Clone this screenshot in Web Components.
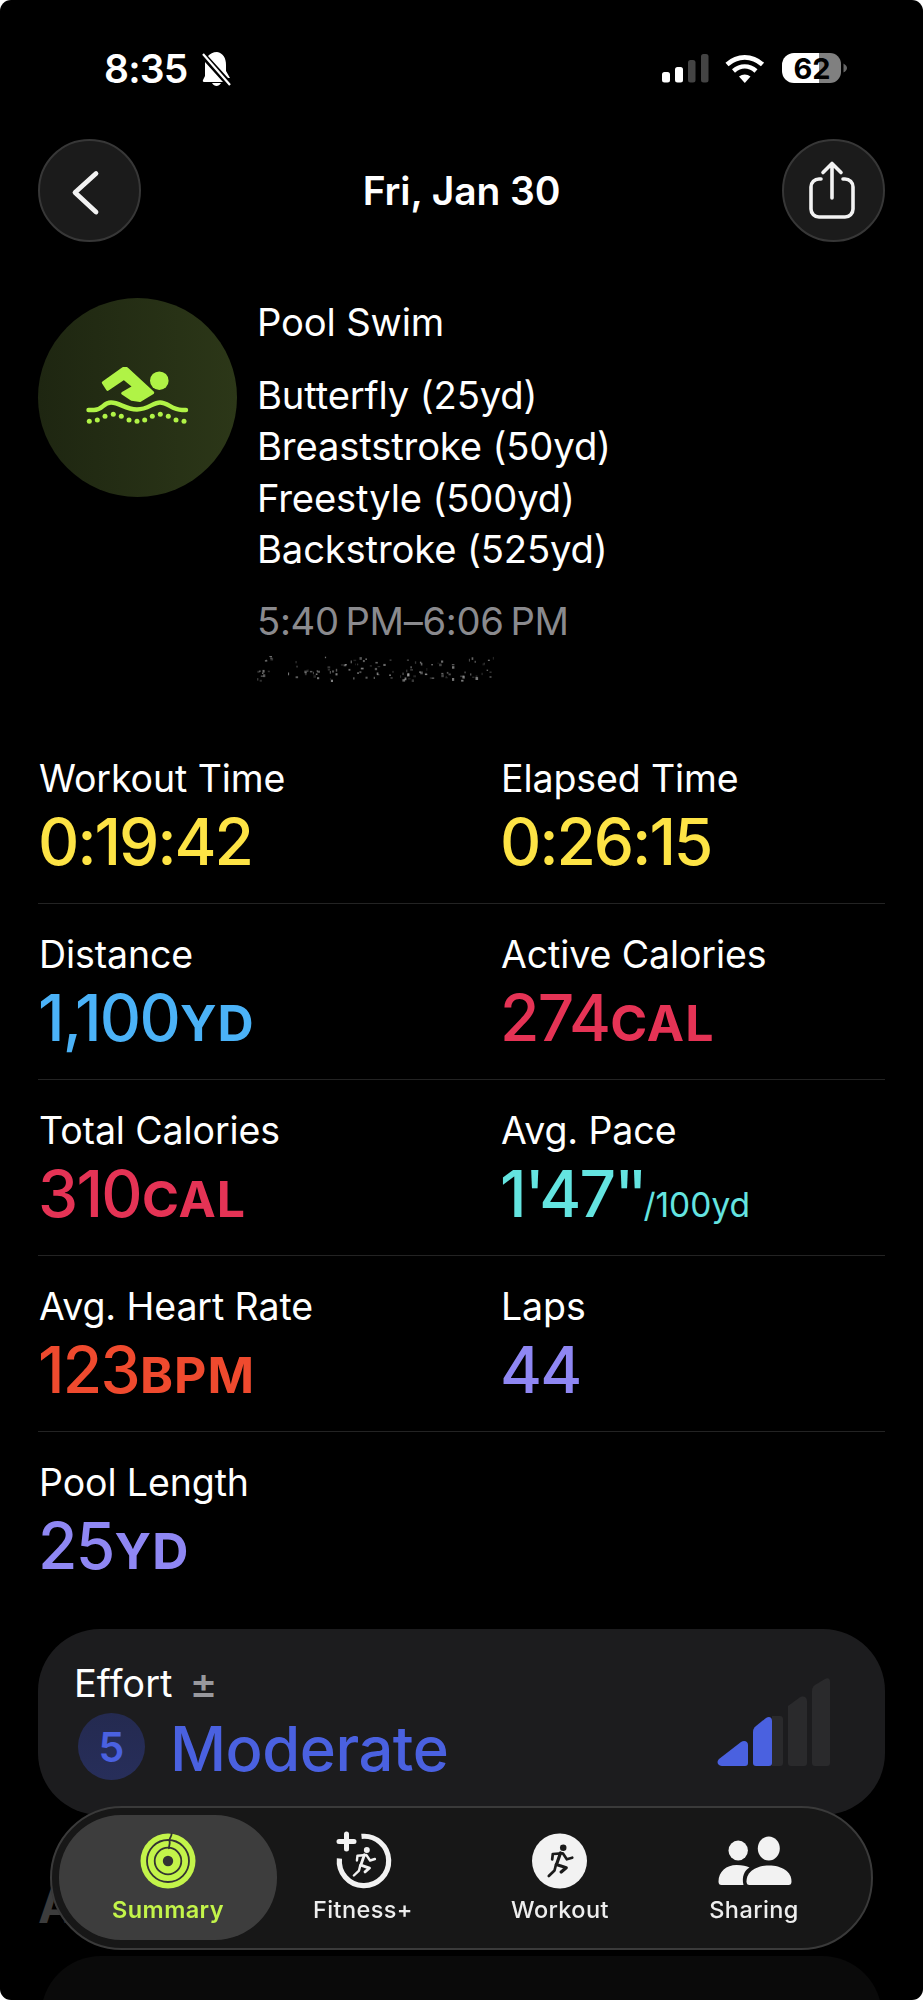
<!DOCTYPE html>
<html lang="en"><head><meta charset="utf-8"><title>Pool Swim</title>
<style>
html,body{margin:0;padding:0;background:#fff}
body{width:923px;height:2000px;overflow:hidden;font-family:Inter,"Liberation Sans",sans-serif;color:#fff}
</style></head><body>
<x-page>
  <x-status></x-status>
  <x-nav>Fri, Jan 30</x-nav>
  <x-head title-text="Pool Swim">
    <div>Butterfly (25yd)</div><div>Breaststroke (50yd)</div><div>Freestyle (500yd)</div><div>Backstroke (525yd)</div>
  </x-head>
  <x-metrics>
    <x-metric label="Workout Time" color="#fde345" value="0:19:42" tight></x-metric>
    <x-metric label="Elapsed Time" color="#fde345" value="0:26:15" tight></x-metric>
    <x-metric label="Distance" color="#4bb2f7" value="1,100" unit="YD"></x-metric>
    <x-metric label="Active Calories" color="#e53355" value="274" unit="CAL"></x-metric>
    <x-metric label="Total Calories" color="#e53355" value="310" unit="CAL"></x-metric>
    <x-metric label="Avg. Pace" color="#64e4e0" value="1'47<span style='letter-spacing:-7px'>''</span>" small="/100yd"></x-metric>
    <x-metric label="Avg. Heart Rate" color="#ef4a2e" value="123" unit="BPM"></x-metric>
    <x-metric label="Laps" color="#8f87f3" value="44"></x-metric>
    <x-metric label="Pool Length" color="#8f87f3" value="25" unit="YD" last></x-metric>
  </x-metrics>
  <x-effort></x-effort>
  <x-activity></x-activity>
  <x-tabbar></x-tabbar>
</x-page>
<script>
function def(name, css, html){
  customElements.define(name, class extends HTMLElement{
    connectedCallback(){
      if(this.shadowRoot) return;
      const r=this.attachShadow({mode:'open'});
      r.innerHTML='<style>'+css+'</style>'+(typeof html==='function'?html(this):html);
    }
  });
}
def('x-page',':host{display:block;width:923px;height:2000px;overflow:hidden;background:#000;border-radius:11px;position:relative}','<slot></slot>');

def('x-status',`:host{display:flex;height:138px;box-sizing:border-box;justify-content:space-between;font-family:Inter,sans-serif}
.time{font-size:39px;line-height:44px;font-weight:600;margin:47px 0 0 104px;letter-spacing:-.8px;display:flex;gap:13px;height:44px}
svg{display:block}`,
`<div class="time"><span>8:35</span><svg width="32" height="36" viewBox="199 52 32 36" style="margin-top:4px" fill="#fff">
<path d="M215 53c6 1 9 6 9 13v6l4 7h-2L206 57c2-2 5-4 9-4zM203 63l18 20h-19c-1 0-1.500-1-1-2l2-4z"/><path d="M210 84h9c-1 2-3 3-4.500 3s-3.500-1-4.500-3z"/><path d="M201 55l27 31" stroke="#fff" stroke-width="2.200"/></svg></div>
<svg width="200" height="60" viewBox="650 40 200 60" style="margin:40px 73px 0 0;flex:none">
<g><rect x="662" y="72" width="8" height="10.500" rx="2.500" fill="#fff"/><rect x="675" y="67" width="8" height="15.500" rx="2.500" fill="#fff"/><rect x="688" y="60" width="7.500" height="22.500" rx="2.500" fill="#444"/><rect x="701" y="54" width="7.500" height="28.500" rx="2.500" fill="#444"/></g>
<g fill="none" stroke="#fff" stroke-width="4.600"><path d="M727 64.500c10.500-9.500 25-9.500 35.500 0"/><path d="M733.500 71c7-6 15.500-6 22.500 0"/></g><path d="M739 76.500c3.500-2.800 8-2.800 11.500 0L744.800 83z" fill="#fff"/>
<path d="M794 53h25v30h-25a12 12 0 0 1-12-12v-6a12 12 0 0 1 12-12z" fill="#fff"/><path d="M819 53h11a11 11 0 0 1 11 11v8a11 11 0 0 1-11 11h-11z" fill="#808080"/><path d="M843.500 63.500c2.500 1.500 3.500 3 3.500 4.500s-1 3-3.500 4.500z" fill="#666"/>
<text x="812" y="78.500" text-anchor="middle" font-family="Inter,sans-serif" font-weight="700" font-size="29" fill="#000">62</text></svg>`);

def('x-nav',`:host{display:flex;height:104px;padding:0 38px;justify-content:space-between;align-items:center}
.b{width:103px;height:103px;box-sizing:border-box;border-radius:50%;background:#1b1b1b;border:2px solid #373737;flex:none;display:flex}
.t{font-size:39px;font-weight:600;letter-spacing:-.1px}svg{display:block;margin:-2px;flex:none}`,
`<div class="b"><svg width="103" height="103" viewBox="38 138 103 103" fill="none" stroke="#f2f2f2" stroke-width="4.800" stroke-linecap="round" stroke-linejoin="round"><path d="M96 172.500L75 191.500L96 211"/></svg></div>
<div class="t"><slot></slot></div>
<div class="b"><svg width="103" height="103" viewBox="782 138 103 103" fill="none" stroke="#f2f2f2" stroke-width="3.600" stroke-linecap="round" stroke-linejoin="round"><path d="M821 178h-2a8 8 0 0 0-8 8v22a8 8 0 0 0 8 8h26a8 8 0 0 0 8-8v-22a8 8 0 0 0-8-8h-2"/><path d="M832 197V163M823 171.500l9-9 9 9"/></svg></div>`);

const dots=[[89.3,421.3],[97.3,420],[105,416.3],[113.3,414.3],[121.3,416.3],[129,420],[137,421.3],[144.7,420],[152.3,416.3],[160.3,414.3],[168.3,416.3],[176,420],[184,421.3]].map(d=>`<circle cx="${d[0]}" cy="${d[1]}" r="2.500"/>`).join('');
let seed=7;function rnd(){seed=(seed*16807)%2147483647;return seed/2147483647}
let specks='';for(let i=0;i<130;i++){const x=rnd()*237,y=2+rnd()*24,o=(.1+rnd()*.4).toFixed(2);if(x>14&&x<30)continue;specks+=`<rect x="${x.toFixed(1)}" y="${y.toFixed(1)}" width="${(1+rnd()*1.800).toFixed(1)}" height="${(1+rnd()*2).toFixed(1)}" fill="#fff" opacity="${o}"/>`}
def('x-head',`:host{display:flex;gap:20px;padding:0 38px;margin-top:56px;align-items:flex-start}
.c{width:199px;height:199px;border-radius:50%;background:linear-gradient(90deg,#1e2611,#2c3718);flex:none;overflow:hidden}
.txt{font-size:38.200px;line-height:51.500px;font-weight:400;letter-spacing:-.15px;margin-top:-1px}
.l{margin:21px 0 20.500px}.tm{color:#8a8a8e;letter-spacing:-.3px}svg{display:block}`,
h=>`<div class="c"><svg width="199" height="199" viewBox="38 298 199 199" fill="#b0f346"><path d="M103.300 382.700L123.300 368.500H126.700L152.700 392.700L140 400.500L131.700 399.300L122.700 393.300L134 386.700L124 378.300L107.700 389.300Z" stroke="#b0f346" stroke-width="3" stroke-linejoin="round"/><circle cx="159.300" cy="380.700" r="9.300"/><path d="M88.500 410H94C103 410 103 402.500 111 402.500C120 402.500 125 409.500 137 409.500C148 409.500 153 402.500 160 402.500C168 402.500 172 410 182 410H186" fill="none" stroke="#b0f346" stroke-width="4.400" stroke-linecap="round"/>${dots}</svg></div>
<div class="txt"><div>${h.getAttribute('title-text')}</div><div class="l"><slot></slot></div><div class="tm">5:40\u2009PM–6:06\u2009PM</div><svg width="237" height="28" viewBox="0 0 237 28" aria-hidden="true" style="margin-top:6px">${specks}</svg></div>`);

def('x-metrics',`:host{display:grid;grid-template-columns:462px 385px;margin:46px 38px 0}`,'<slot></slot>');
def('x-metric',`:host{display:block;height:176px;box-sizing:border-box;padding-top:29px;border-bottom:1.500px solid #232323}
:host([last]){border-bottom:0}
.l{font-size:37.500px;line-height:44px;padding-left:1px;letter-spacing:-.1px}
.v{font-size:64px;line-height:72px;font-weight:500;margin-top:5px;letter-spacing:-1.700px;white-space:nowrap}
:host([tight]) .v{letter-spacing:-2.100px}
.u{font-size:50px;letter-spacing:1px;font-weight:700;margin-left:1px}.s{font-size:33.500px;font-weight:400;letter-spacing:0;margin-left:3px}`,
h=>`<div class="l">${h.getAttribute('label')}</div><div class="v" style="color:${h.getAttribute('color')}">${h.getAttribute('value')}${h.hasAttribute('unit')?`<span class="u">${h.getAttribute('unit')}</span>`:''}${h.hasAttribute('small')?`<span class="s">${h.getAttribute('small')}</span>`:''}</div>`);

def('x-effort',`:host{display:block;height:186px;box-sizing:border-box;margin:21px 38px 0;border-radius:62px;background:#1c1c1e;padding:31px 36px 0;position:relative}
.t{font-size:38px;line-height:46px;display:flex;align-items:center;gap:17px}
.pm{color:#98989d;font-size:42px;line-height:46px;font-weight:500}
.r{display:flex;align-items:center;margin:7px 0 0 4px;gap:25px;height:68px}
.n{width:67px;height:67px;border-radius:50%;background:linear-gradient(#242a50,#272e5a);color:#4a61e0;font-size:41px;font-weight:600;display:flex;align-items:center;justify-content:center}
.m{color:#4a61e0;font-size:61.500px;font-weight:500;letter-spacing:-.5px;padding-top:4px}
svg{position:absolute;left:0;top:0}`,
`<div class="t">Effort<span class="pm">±</span></div><div class="r"><div class="n">5</div><div class="m">Moderate</div></div>
<svg width="847" height="186" viewBox="38 1630 847 186"><g fill="#2a2a2c"><path d="M772 1717l8-0c2 0 3 1.500 3 3v44c0 2-1 3-3 3h-8z"/><path d="M788 1707l11-8c4-3 8-1 8 3v62c0 2-1 3-3 3h-13c-2 0-3-1-3-3z"/><path d="M812 1692c0-3 1-4 3-6l10-6c3-1.500 5-.5 5 3v81c0 2-1 3-3 3h-12c-2 0-3-1-3-3z"/></g>
<path d="M719 1760l22-17c3-2 7-1 7 3v18c0 2-1 3-3 3h-23c-4 0-6-4-3-7z" fill="#4a61e0"/><path d="M753 1733c0-3 1-4 3-6l10-8c3-2 6-1 6 3v42c0 2-1 3-3 3h-13c-2 0-3-1-3-3z" fill="#4a61e0"/></svg>`);

def('x-activity',`:host{display:block;margin:0 41px 0 38px}
.h{font-size:48px;font-weight:700;line-height:58px;color:#3c3c3c;margin-top:62px}
.c{height:60px;margin:21.500px 0 0 3px;border-radius:60px 60px 0 0;background:#0a0a0a}`,
`<div class="h">Activity</div><div class="c"></div>`);

def('x-tabbar',`:host{position:absolute;left:50px;top:1806px;width:823px;height:144px;box-sizing:border-box;border-radius:72px;background:rgba(24,24,24,.97);border:2.500px solid #3a3a3a;display:block;backdrop-filter:blur(7px)}
.p{position:absolute;left:6.500px;top:6.500px;width:218px;height:125px;border-radius:62px;background:rgba(64,64,64,.94)}
.t{position:absolute;top:0;height:100%;text-align:center;transform:translateX(-50%);white-space:nowrap;font-size:23.500px;font-weight:500;letter-spacing:.4px;color:#eee;width:180px}
.t span{position:absolute;left:0;right:0;top:87px;line-height:30px}
svg{position:absolute;left:0;top:0}.a{color:#c3f44a;font-weight:600}`,
()=>{
const runner=(cx,cy,col,s=1)=>`<g transform="translate(${cx} ${cy}) scale(${s})" fill="none" stroke="${col}" stroke-width="2.700" stroke-linecap="round" stroke-linejoin="round"><circle cx="3.700" cy="-13.300" r="2.300" fill="${col}" stroke-width="2"/><path d="M-7.300-1.700L-6.700-7L3.300-7.700L7.300-1.700L12.700-3.300"/><path d="M1-8L-3 3.500L6.700 6.700L1.700 11" stroke-width="3.200"/><path d="M-3.500 3.500L-5 9.500L-10.700 15"/></g>`;
return `<div class="p"></div>
<svg width="823" height="144" viewBox="52.500 1808.500 823 144">
<circle cx="168.500" cy="1861.500" r="27.500" fill="#c3f44a"/><g fill="none" stroke="#333" stroke-width="1.800"><circle cx="168.500" cy="1861.500" r="21"/><circle cx="168.500" cy="1861.500" r="13.300"/></g><circle cx="168.500" cy="1861.500" r="5.200" fill="#333"/><path d="M172 1833.500c1 4-3 5-2 8s-1 5-.5 8" fill="none" stroke="#333" stroke-width="1.800"/>
<path d="M362 1836.900A24.700 24.700 0 1 1 339.900 1859" fill="none" stroke="#f2f2f2" stroke-width="5.200"/><path d="M347 1834.500v15M339.500 1842h15" stroke="#f2f2f2" stroke-width="5" stroke-linecap="round"/>${runner(364,1862.500,'#f2f2f2',.9)}
<circle cx="560" cy="1861.500" r="27.500" fill="#f2f2f2"/>${runner(560,1861.500,'#1a1a1a')}
<g fill="#f2f2f2"><ellipse cx="738.700" cy="1851" rx="9.700" ry="10"/><ellipse cx="769.300" cy="1849" rx="11" ry="12"/><path d="M747 1882C747 1872 757 1866 769.500 1866C782 1866 792 1872 792 1882Q792 1885.500 789 1885.500H750Q747 1885.500 747 1882Z"/><path d="M719 1882C719 1872 727 1865.500 737 1865.500C743 1865.500 747 1866.500 750 1868C745 1871 742 1877 744 1885.500H722Q719 1885.500 719 1882Z"/></g></svg>
<div class="t a" style="left:116px"><span>Summary</span></div>
<div class="t" style="left:311px"><span>Fitness+</span></div>
<div class="t" style="left:508px"><span>Workout</span></div>
<div class="t" style="left:702px"><span>Sharing</span></div>`});
</script>
</body></html>
